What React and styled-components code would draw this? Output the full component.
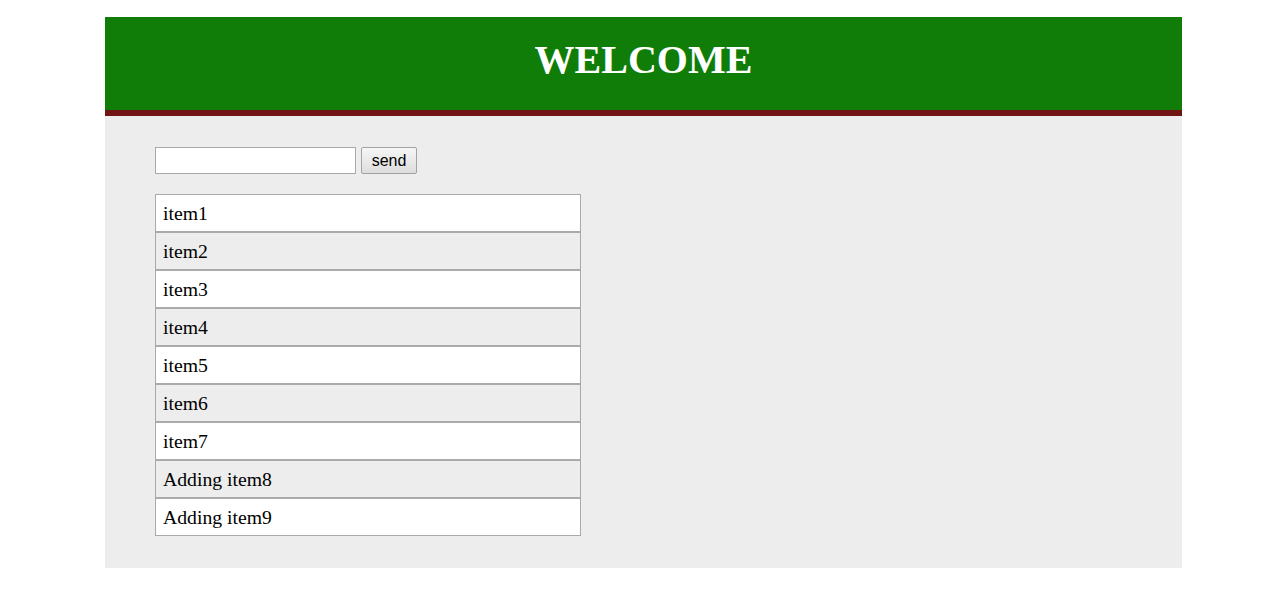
import styled, { createGlobalStyle } from "styled-components";

const GlobalStyle = createGlobalStyle`
  body {
    margin: 0;
    background: #ffffff;
    font-family: "Liberation Serif", "Times New Roman", serif;
  }
`;

const Page = styled.div`
  padding: 17px 0 0 105px;
`;

const Wrapper = styled.div`
  width: 1077px;
  background: #ededed;
`;

const Header = styled.header`
  box-sizing: border-box;
  height: 99px;
  padding-bottom: 8px;
  background: #0f7d07;
  border-bottom: 6px solid #701414;
  display: flex;
  align-items: center;
  justify-content: center;
`;

const Title = styled.h1`
  margin: 0;
  color: #ffffff;
  font-size: 40px;
  font-weight: bold;
  font-family: "Liberation Serif", "Times New Roman", serif;
`;

const Content = styled.main`
  padding: 31px 50px 32px;
`;

const Form = styled.form`
  display: flex;
  gap: 5px;
  margin-bottom: 20px;
`;

const Input = styled.input`
  box-sizing: border-box;
  width: 201px;
  height: 27px;
  border: 1px solid #a9a9a9;
  background: #ffffff;
  padding: 2px 4px;
  margin: 0;
`;

const SendButton = styled.button`
  box-sizing: border-box;
  width: 56px;
  height: 27px;
  margin: 0;
  border: 1px solid #a3a3a3;
  border-radius: 2px;
  background: linear-gradient(#f6f6f6, #dddddd);
  font-family: "Liberation Sans", Arial, sans-serif;
  font-size: 16px;
  color: #000;
  padding: 0;
`;

const List = styled.ul`
  list-style: none;
  margin: 0;
  padding: 0;
  width: 426px;
`;

const Item = styled.li`
  box-sizing: border-box;
  height: 38px;
  border: 1px solid #aaaaaa;
  background: ${(p) => (p.$odd ? "#ededed" : "#ffffff")};
  padding: 7px 7px;
  font-size: 19.7px;
  line-height: 22px;
  color: #000;
`;

const items = [
  "item1",
  "item2",
  "item3",
  "item4",
  "item5",
  "item6",
  "item7",
  "Adding item8",
  "Adding item9",
];

export default function App() {
  return (
    <>
      <GlobalStyle />
      <Page>
        <Wrapper>
          <Header>
            <Title>WELCOME</Title>
          </Header>
          <Content>
            <Form onSubmit={(e) => e.preventDefault()}>
              <Input type="text" />
              <SendButton type="submit">send</SendButton>
            </Form>
            <List>
              {items.map((item, i) => (
                <Item key={item} $odd={i % 2 === 1}>
                  {item}
                </Item>
              ))}
            </List>
          </Content>
        </Wrapper>
      </Page>
    </>
  );
}
